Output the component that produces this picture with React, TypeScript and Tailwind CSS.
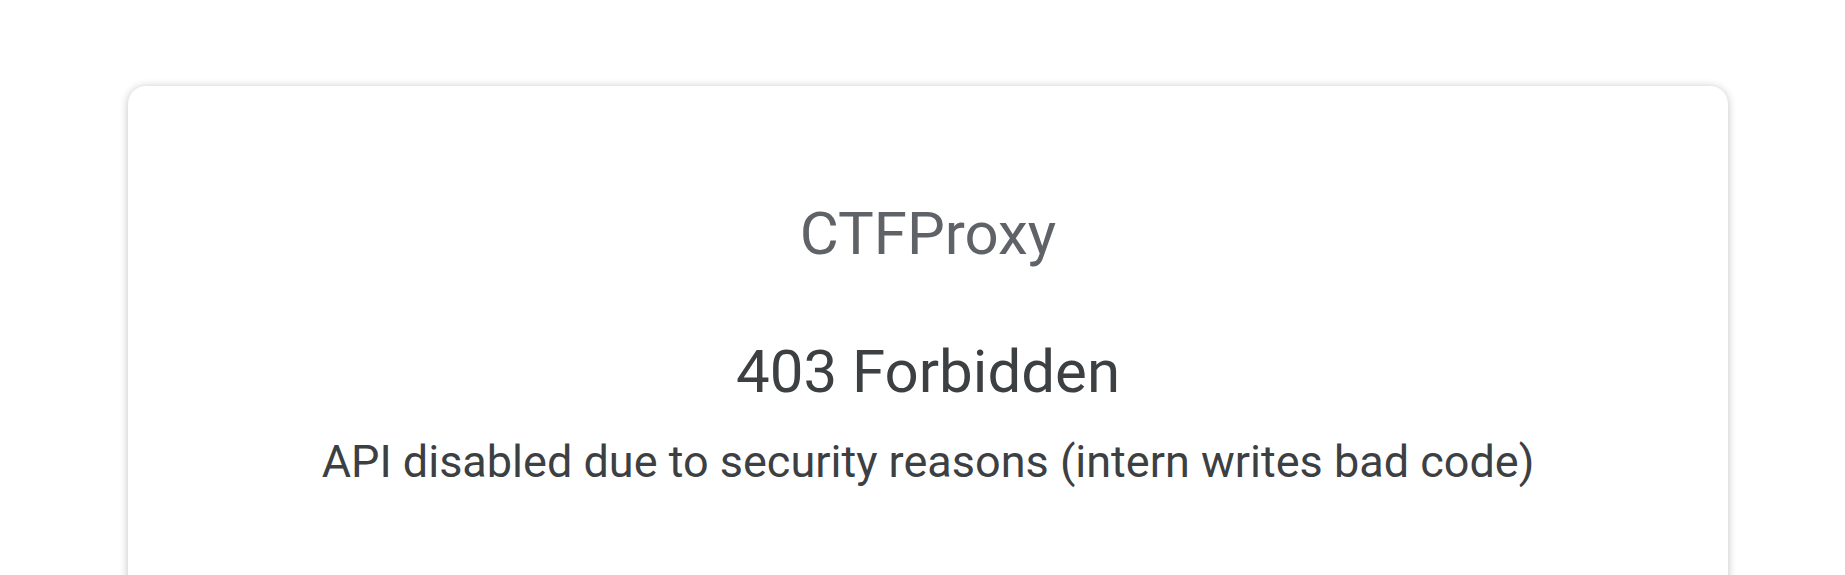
export default function App() {
  return (
    <div className="min-h-screen bg-white pl-[128px] pt-[86px] font-['Roboto',sans-serif]">
      <div className="h-[600px] w-[1600px] rounded-[18px] bg-white shadow-[0_1px_8px_rgba(0,0,0,0.25)] pt-[108px] text-center">
        <h1 className="text-[60px] leading-[80px] font-normal text-[#5f6368]">CTFProxy</h1>
        <h2 className="mt-[58px] text-[60px] leading-[80px] font-normal text-[#3c4043]">403 Forbidden</h2>
        <p className="mt-[20px] text-[45px] leading-[60px] text-[#3c4043]">
          API disabled due to security reasons (intern writes bad code)
        </p>
      </div>
    </div>
  );
}
